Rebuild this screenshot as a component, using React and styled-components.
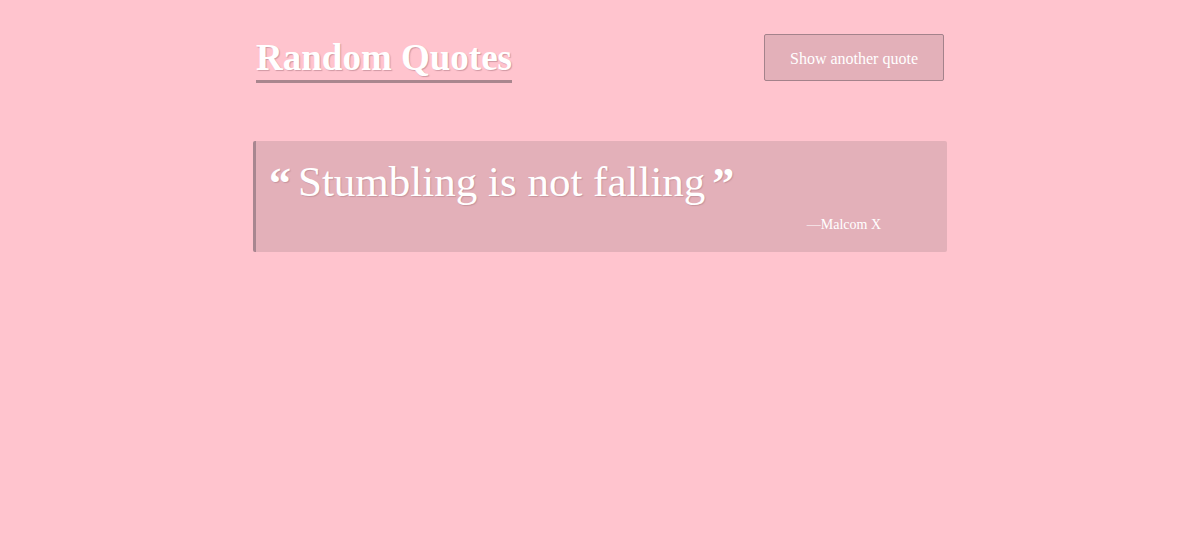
import React, { useState } from "react";
import styled, { createGlobalStyle } from "styled-components";

const GlobalStyle = createGlobalStyle`
  html, body {
    margin: 0;
    padding: 0;
    background: #ffc4ce;
    font-family: "Liberation Serif", "DejaVu Serif", serif;
  }
`;

const Page = styled.div`
  min-height: 550px;
  background: #ffc4ce;
`;

const Wrapper = styled.div`
  width: 694px;
  margin: 0 auto;
  padding-top: 34px;
`;

const Header = styled.header`
  display: flex;
  justify-content: space-between;
  align-items: flex-start;
  padding: 0 3px;
`;

const Title = styled.h1`
  margin: 0;
  padding-top: 2px;
  font-size: 37px;
  line-height: 44px;
  font-weight: 700;
  color: #fff;
  text-shadow: 1px 1px 1px rgba(150, 100, 110, 0.45);
  border-bottom: 3px solid #a9868e;
`;

const Button = styled.button`
  width: 180px;
  height: 47px;
  background: #e3b0b9;
  border: 1px solid #a4828b;
  border-radius: 2px;
  color: #fff;
  font-family: inherit;
  font-size: 16px;
  cursor: pointer;
  padding: 2px 0 0;
`;

const Card = styled.blockquote`
  margin: 58px 0 0;
  height: 111px;
  box-sizing: border-box;
  background: #e3b0b9;
  border-left: 3px solid #a88690;
  border-radius: 2px;
  padding: 15px 0 0 13px;
  display: flex;
  flex-direction: column;
`;

const QuoteText = styled.p`
  margin: 0;
  font-size: 43px;
  line-height: 52px;
  color: #fff;
  text-shadow: 1px 1px 1px rgba(150, 100, 110, 0.35);
  display: flex;
  align-items: flex-start;
  gap: 7px;
`;

const Mark = styled.span`
  font-family: "Liberation Serif", serif;
  font-weight: 700;
  font-size: 44px;
  line-height: 44px;
  margin-top: 6px;
`;

const Author = styled.cite`
  align-self: flex-end;
  margin: 9px 66px 0 0;
  font-style: normal;
  font-size: 14px;
  color: #fff;
`;

const quotes = [
  { text: "Stumbling is not falling", author: "Malcom X" },
];

export default function App() {
  const [index, setIndex] = useState(0);
  const q = quotes[index];

  return (
    <Page>
      <GlobalStyle />
      <Wrapper>
        <Header>
          <Title>Random Quotes</Title>
          <Button onClick={() => setIndex((index + 1) % quotes.length)}>
            Show another quote
          </Button>
        </Header>
        <Card>
          <QuoteText>
            <Mark>“</Mark>
            {q.text}
            <Mark>”</Mark>
          </QuoteText>
          <Author>—{q.author}</Author>
        </Card>
      </Wrapper>
    </Page>
  );
}
